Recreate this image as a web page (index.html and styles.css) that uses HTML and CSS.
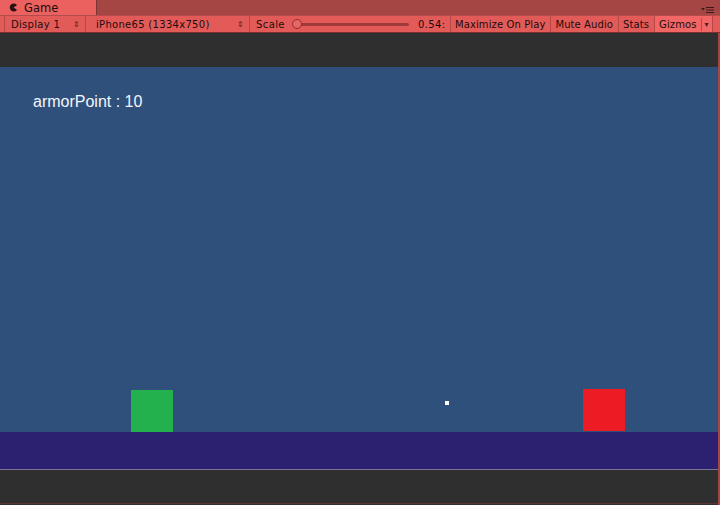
FILE: index.html
```html
<!DOCTYPE html>
<html lang="en">
<head>
  <meta charset="UTF-8">
  <title>Game</title>
  <link rel="stylesheet" href="styles.css">
</head>
<body>

  <div class="window">
    <div class="tabbar">
      <div class="tab">
        <svg class="tab-icon" width="9" height="9" viewBox="0 0 9 9">
          <path d="M8 2.2 A4 4 0 1 0 8 6.8 L4.5 4.5 Z" fill="#2a1010"/>
        </svg>
        <span>Game</span>
      </div>
      <div class="tab-menu">
        <svg width="14" height="8" viewBox="0 0 14 8">
          <path d="M0 2 H4 L2 4.5 Z" fill="#3a1a1a"/>
          <rect x="5" y="1" width="8" height="1" fill="#3a1a1a"/>
          <rect x="5" y="3.5" width="8" height="1" fill="#3a1a1a"/>
          <rect x="5" y="6" width="8" height="1" fill="#3a1a1a"/>
        </svg>
      </div>
    </div>

    <div class="toolbar">
      <div class="tool drop display">Display 1<span class="updown">&#8661;</span></div>
      <div class="tool drop aspect">iPhone65 (1334x750)<span class="updown">&#8661;</span></div>
      <div class="tool scale">
        <span>Scale</span>
        <div class="slider"><div class="knob"></div></div>
        <span class="value">0.54:</span>
      </div>
      <div class="tool">Maximize On Play</div>
      <div class="tool">Mute Audio</div>
      <div class="tool">Stats</div>
      <div class="tool gizmos">Gizmos<span class="gizmo-arrow">&#9662;</span></div>
    </div>

    <div class="view">
      <div class="letterbox"></div>
      <div class="scene">
        <div class="hud">armorPoint : 10</div>
        <div class="player"></div>
        <div class="bullet"></div>
        <div class="enemy"></div>
      </div>
      <div class="ground"></div>
      <div class="letterbox bottom"></div>
    </div>
  </div>

</body>
</html>
```

FILE: styles.css
```css
body {
  margin: 0;
  background: #313131;
  font-family: 'DejaVu Sans', sans-serif;
}

.window {
  width: 720px;
  height: 505px;
  display: flex;
  flex-direction: column;
  overflow: hidden;
}

/* tab strip */
.tabbar {
  height: 15px;
  background: #a54645;
  display: flex;
  justify-content: space-between;
}

.tab {
  width: 97px;
  height: 16px;
  background: #ea615f;
  display: flex;
  align-items: center;
  gap: 6px;
  padding-left: 9px;
  box-sizing: border-box;
  font-size: 11.5px;
  color: #1e0c0c;
  border-right: 1px solid #7c3535;
}

.tab-icon {
  margin-top: -1px;
}

.tab-menu {
  display: flex;
  align-items: flex-end;
  padding: 0 5px 1px 0;
}

/* toolbar */
.toolbar {
  height: 18px;
  background: #e35b59;
  border-bottom: 1px solid #7a3030;
  border-top: 1px solid #b34b4a;
  box-sizing: border-box;
  display: flex;
  padding-left: 4px;
  font-size: 10px;
  letter-spacing: 0.1px;
  color: #1e0c0c;
}

.tool {
  display: flex;
  align-items: center;
  padding: 0 5px 0 4px;
  border-right: 1px solid #b84847;
  white-space: nowrap;
}

.drop {
  justify-content: space-between;
  padding-left: 6px;
}

.display {
  width: 82px;
  box-sizing: border-box;
  margin-right: 4px;
  border-left: 1px solid #b84847;
  letter-spacing: 0.3px;
}

.aspect {
  width: 160px;
  box-sizing: border-box;
  letter-spacing: 0.3px;
}

.updown {
  font-size: 8px;
  color: #4a2020;
}

.scale {
  width: 201px;
  box-sizing: border-box;
  gap: 4px;
  padding-left: 6px;
  letter-spacing: 0.4px;
}

.slider {
  flex: 1;
  height: 3px;
  background: #a03a3a;
  border-radius: 2px;
  position: relative;
  margin: 0 5px 0 7px;
}

.knob {
  position: absolute;
  left: -4px;
  top: -4px;
  width: 10px;
  height: 10px;
  box-sizing: border-box;
  border-radius: 50%;
  border: 1px solid #8a3030;
  background: #e86563;
}

.value {
  width: 27px;
}

.gizmos {
  background: #f26765;
  padding-right: 0;
  gap: 4px;
  border-left: 1px solid #b84847;
  margin-left: -1px;
}

.gizmo-arrow {
  font-size: 8px;
  border-left: 1px solid #b84847;
  padding: 2px 3px 2px 3px;
  color: #4a2020;
}

/* game view */
.view {
  flex: 1;
  display: flex;
  flex-direction: column;
  border-right: 2px solid #a84645;
}

.letterbox {
  height: 34px;
  background: #2f2f2f;
}

.letterbox.bottom {
  height: 35px;
  border-top: 1px solid #7d7393;
  box-sizing: border-box;
  border-bottom: 1px solid #5a3434;
}

.scene {
  height: 365px;
  background: #30507c;
  position: relative;
}

.hud {
  position: absolute;
  left: 33px;
  top: 26px;
  font-family: 'Liberation Sans', sans-serif;
  font-size: 16px;
  color: #f4f6fa;
}

.player {
  position: absolute;
  left: 131px;
  top: 323px;
  width: 42px;
  height: 42px;
  background: #22b14c;
}

.enemy {
  position: absolute;
  left: 583px;
  top: 322px;
  width: 42px;
  height: 42px;
  background: #ed1c24;
}

.bullet {
  position: absolute;
  left: 445px;
  top: 334px;
  width: 4px;
  height: 4px;
  background: #fff;
}

.ground {
  height: 37px;
  background: #2b2170;
}
```
